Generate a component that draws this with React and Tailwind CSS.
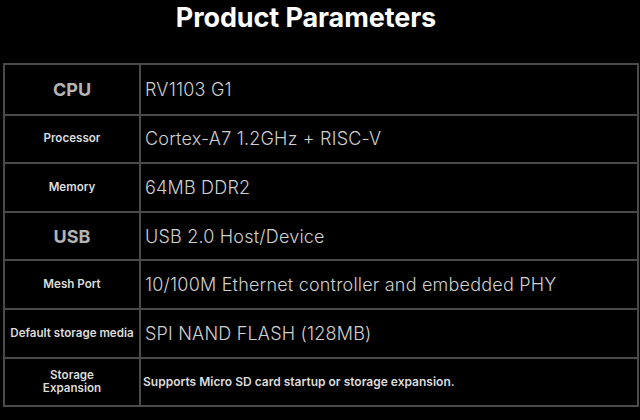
import React from "react";

const rows = [
  { label: "CPU", big: true, value: "RV1103 G1" },
  { label: "Processor", value: "Cortex-A7 1.2GHz + RISC-V" },
  { label: "Memory", value: "64MB DDR2" },
  { label: "USB", big: true, value: "USB 2.0 Host/Device" },
  { label: "Mesh Port", value: "10/100M Ethernet controller and embedded PHY" },
  { label: "Default storage media", value: "SPI NAND FLASH (128MB)" },
  { label: "Storage\nExpansion", value: "Supports Micro SD card startup or storage expansion.", small: true },
];

export default function App() {
  return (
    <div
      className="w-[640px] h-[420px] bg-black overflow-hidden"
      style={{ fontFamily: "Inter, 'Noto Sans', sans-serif" }}
    >
      <div className="h-[63px] flex justify-center pr-[28px]">
        <h1 className="text-[27px] font-bold text-white leading-[36px] tracking-[-0.1px]">
          Product Parameters
        </h1>
      </div>
      <div className="ml-[3px] w-[636px] border-2 border-[#4a4a4a] flex flex-col">
        {rows.map((r, i) => (
          <div
            key={i}
            className={`flex h-[48.6px] ${i > 0 ? "border-t-2 border-[#4a4a4a]" : ""}`}
          >
            <div className="w-[136px] shrink-0 border-r-2 border-[#4a4a4a] flex items-center justify-center text-center">
              {r.big ? (
                <span className="text-[18px] font-bold text-[#b4b4b4]">{r.label}</span>
              ) : (
                <span className="text-[11.6px] font-semibold text-[#dcdcdc] leading-[13px] whitespace-pre-line">
                  {r.label}
                </span>
              )}
            </div>
            <div className="flex-1 flex items-center">
              {r.small ? (
                <span className="pl-[2px] text-[12px] font-semibold text-[#dcdcdc]">{r.value}</span>
              ) : (
                <span className="pl-[4px] text-[18px] font-light text-[#cfcfcf] tracking-[0.2px]">{r.value}</span>
              )}
            </div>
          </div>
        ))}
      </div>
    </div>
  );
}
